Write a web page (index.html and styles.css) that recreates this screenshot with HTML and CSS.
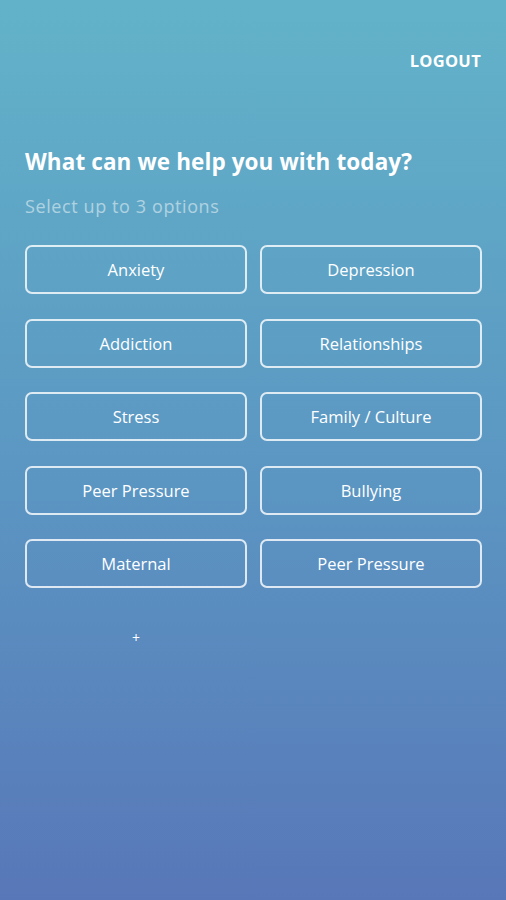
FILE: index.html
```html
<!DOCTYPE html>
<html lang="en">
<head>
    <meta charset="UTF-8">
    <meta name="viewport" content="width=device-width, initial-scale=1.0">
    <title>Topics</title>
    <link rel="stylesheet" href="styles.css">
</head>

<body>

    <div class="top-bar">
        <a class="logout" href="#">LOGOUT</a>
    </div>

    <h2 class="title">What can we help you with today?</h2>
    <p class="subtitle">Select up to 3 options</p>

    <div class="options">
        <button class="option">Anxiety</button>
        <button class="option">Depression</button>
        <button class="option">Addiction</button>
        <button class="option">Relationships</button>
        <button class="option">Stress</button>
        <button class="option">Family / Culture</button>
        <button class="option">Peer Pressure</button>
        <button class="option">Bullying</button>
        <button class="option">Maternal</button>
        <button class="option">Peer Pressure</button>
    </div>

    <div class="more">
        <span class="plus">+</span>
    </div>

</body>
</html>
```

FILE: styles.css
```css
/* Page with blue gradient */
html, body {
    height: 100%;
}

body {
    margin: 0;
    padding: 0 24px 0 25px;
    background: linear-gradient(to bottom, #62b3c9 0%, #5b95c2 55%, #5877b8 100%);
    font-family: "Open Sans", "Noto Sans", sans-serif;
    color: white;
    box-sizing: border-box;
}

/* Logout link top right */
.top-bar {
    display: flex;
    justify-content: flex-end;
    padding-top: 51px;
    margin-right: 1px;
}

.logout {
    color: white;
    text-decoration: none;
    font-weight: 700;
    font-size: 16.5px;
    line-height: 20px;
    letter-spacing: 0.3px;
}

.title {
    margin: 76px 0 0 0;
    font-size: 22.5px;
    line-height: 30px;
    font-weight: 700;
    letter-spacing: 0.1px;
}

.subtitle {
    margin: 17px 0 0 0;
    font-size: 18px;
    line-height: 24px;
    letter-spacing: 0.6px;
    color: rgba(255, 255, 255, 0.5);
}

/* Two column grid of options */
.options {
    display: grid;
    grid-template-columns: 1fr 1fr;
    column-gap: 13px;
    row-gap: 24.5px;
    margin-top: 27px;
}

.option {
    height: 49px;
    background: transparent;
    border: 2px solid rgba(255, 255, 255, 0.8);
    border-radius: 7px;
    color: white;
    font-family: "Open Sans", "Noto Sans", sans-serif;
    font-size: 16.5px;
}

.more {
    width: 222px;
    text-align: center;
    margin-top: 38px;
}

.plus {
    font-size: 14px;
}
```
